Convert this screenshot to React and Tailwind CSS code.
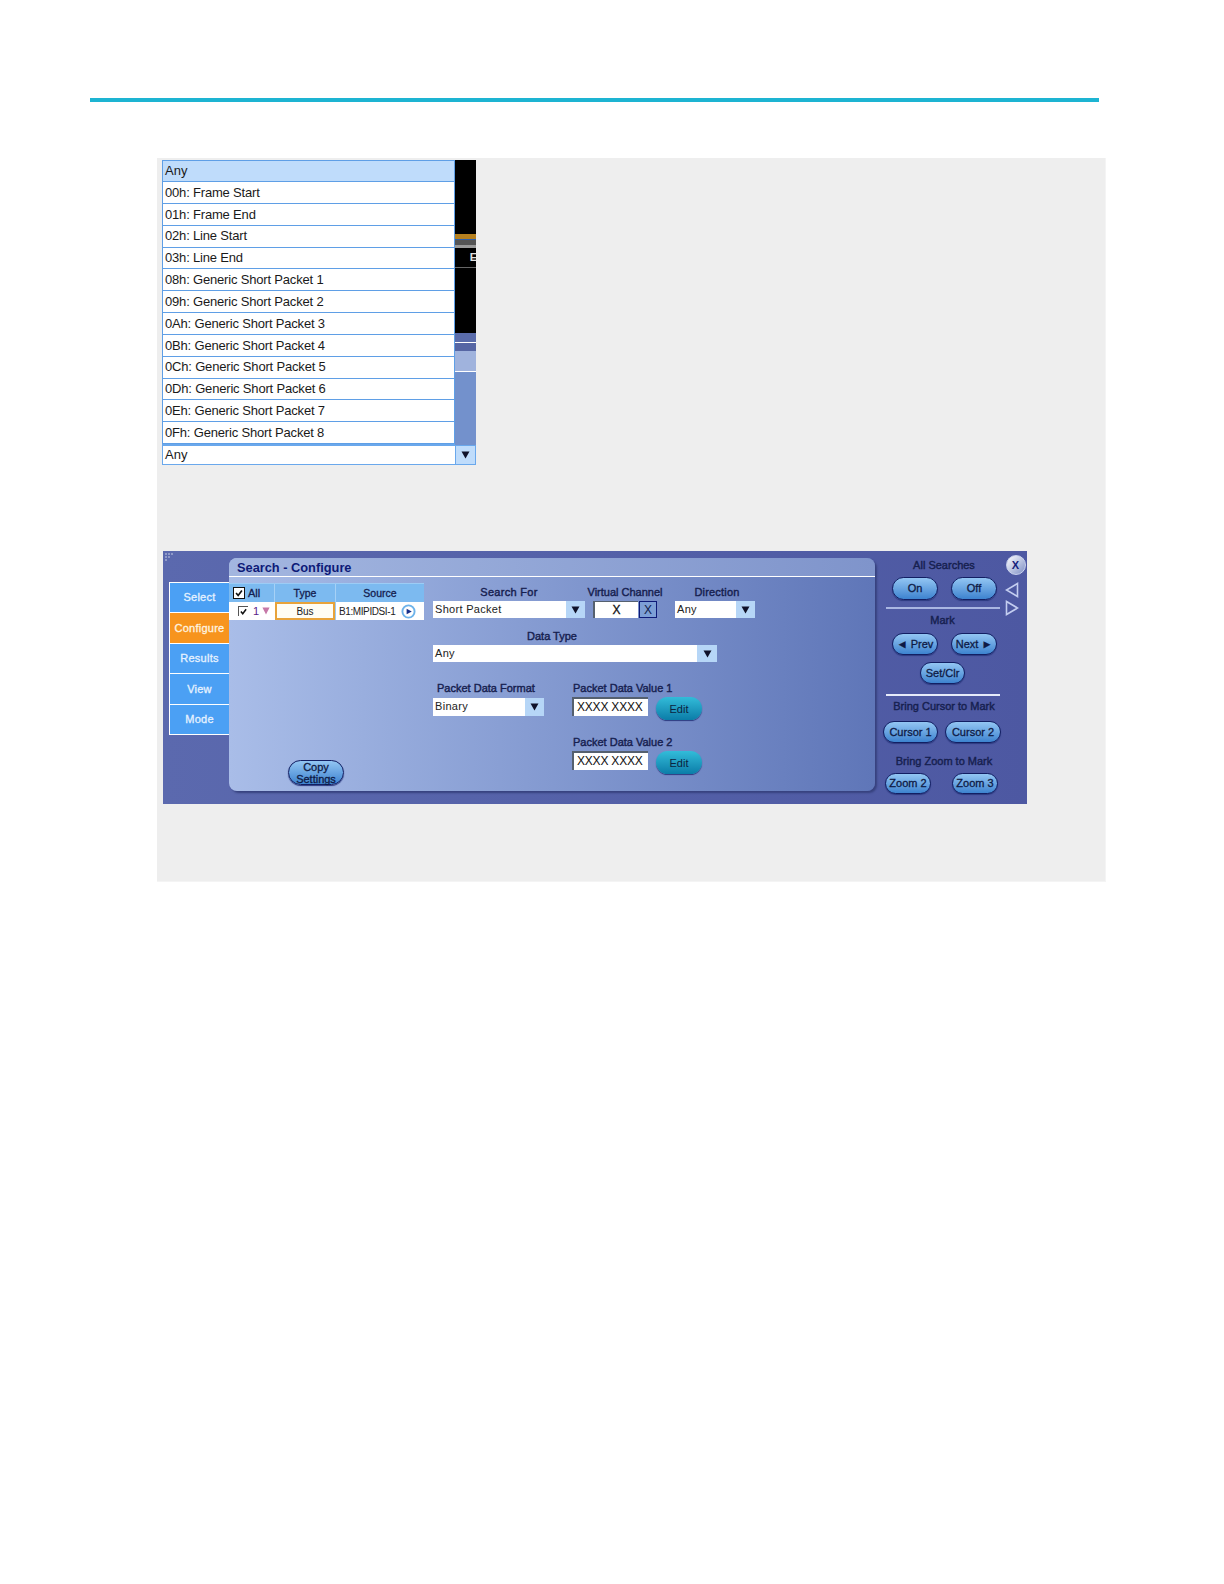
const FONT = "font-['Liberation_Sans',Arial,sans-serif]";

const rows = [
  "00h: Frame Start",
  "01h: Frame End",
  "02h: Line Start",
  "03h: Line End",
  "08h: Generic Short Packet 1",
  "09h: Generic Short Packet 2",
  "0Ah: Generic Short Packet 3",
  "0Bh: Generic Short Packet 4",
  "0Ch: Generic Short Packet 5",
  "0Dh: Generic Short Packet 6",
  "0Eh: Generic Short Packet 7",
  "0Fh: Generic Short Packet 8",
];

function Down({ className = "w-[9px] h-[8px]" }) {
  return (
    <svg viewBox="0 0 9 8" className={className}>
      <polygon points="0.5,0.5 8.5,0.5 4.5,7.5" fill="#10122a" />
    </svg>
  );
}

function DropList() {
  return (
    <div className="flex ml-[5px] mt-[2px] w-[314px] h-[305px]">
      <div className="w-[293px] flex flex-col">
        <div className="h-[22px] shrink-0 bg-[#bfdcfb] border border-[#5f9fe6] flex items-center pl-[2px] text-[13px] text-[#1a1a1a]">
          Any
        </div>
        {rows.map((r) => (
          <div
            key={r}
            className="h-[21.85px] shrink-0 bg-white border-l border-r border-b border-[#5f9fe6] flex items-center pl-[2px] text-[13px] text-[#1a1a1a] tracking-[-0.18px] whitespace-nowrap"
          >
            {r}
          </div>
        ))}
        <div className="h-[21px] shrink-0 bg-white border-l border-b border-t-2 border-[#6aa8ec] flex items-center pl-[2px] text-[13px] text-[#1a1a1a]">
          Any
        </div>
      </div>
      <div className="w-[21px] flex flex-col">
        <div className="h-[74px] bg-black" />
        <div className="h-[5px] bg-[#b5801f]" />
        <div className="h-[1px] bg-[#2f5fa8]" />
        <div className="h-[5px] bg-[#555555]" />
        <div className="h-[3px] bg-[#9a9a9a]" />
        <div className="h-[19px] bg-black flex justify-end items-start text-[11px] font-bold text-[#e0e0e0] overflow-hidden">
          <span className="mr-[-1px] mt-[1px]">E</span>
        </div>
        <div className="h-[1px] bg-[#666666]" />
        <div className="h-[65px] bg-black" />
        <div className="h-[9px] bg-[#5a6cab]" />
        <div className="h-[1px] bg-white" />
        <div className="h-[8px] bg-[#5666a4]" />
        <div className="h-[20px] bg-[#a0b3dd]" />
        <div className="h-[1px] bg-white" />
        <div className="h-[73px] bg-[#7391cc]" />
        <div className="h-[20px] bg-[#bfdcfb] border border-[#6aa8ec] flex items-center justify-center">
          <Down />
        </div>
      </div>
    </div>
  );
}

function Tab({ label, active }) {
  return (
    <div
      className={
        active
          ? "h-[30.4px] bg-[#f7941d] border-t border-l border-white flex items-center justify-center text-[11px] tracking-[0.25px] text-[#fff4e0] [-webkit-text-stroke:0.3px_#fff4e0]"
          : "h-[30.4px] bg-[#4ba0f4] border-t border-l border-white flex items-center justify-center text-[11px] tracking-[0.25px] text-[#e6f2ff] [-webkit-text-stroke:0.3px_#e6f2ff]"
      }
    >
      {label}
    </div>
  );
}

function Check({ className }) {
  return (
    <div className={className}>
      <svg viewBox="0 0 12 12" className="w-full h-full">
        <path d="M2.5 6 L5 9 L9.5 3" stroke="#111" strokeWidth="2" fill="none" />
      </svg>
    </div>
  );
}

function Btn({ className, children }) {
  return (
    <div
      className={
        "rounded-full border border-[#121f63] bg-gradient-to-b from-[#93c6f3] to-[#3d83cf] flex items-center justify-center text-[11px] text-[#0e1a45] [-webkit-text-stroke:0.3px_#0e1a45] shadow-[0_1px_1px_#2d3a80] whitespace-nowrap " +
        className
      }
    >
      {children}
    </div>
  );
}

function Edit() {
  return (
    <div className="ml-[8px] w-[46px] h-[23px] rounded-full bg-gradient-to-b from-[#32bcd9] to-[#0a7da8] flex items-center justify-center text-[11px] text-[#0b2340] shadow-[0_1px_1px_#2d3a80] pt-[2px]">
      Edit
    </div>
  );
}

function Select({ className, text, arrow }) {
  return (
    <div className={"flex " + className}>
      <div className="flex-1 bg-white flex items-center pl-[2px] pb-[1px] text-[11px] tracking-[0.3px] text-[#222]">
        {text}
      </div>
      <div className={"bg-[#b6d6f7] flex items-center justify-center " + arrow}>
        <Down />
      </div>
    </div>
  );
}

function ValueBox({ text }) {
  return (
    <div className="w-[76px] h-[19px] bg-white border-t-2 border-l-2 border-[#55606f] flex items-center pl-[3px] pb-[1px] text-[12px] tracking-[-0.2px] text-[#111] whitespace-nowrap">
      {text}
    </div>
  );
}

function Label({ className, children }) {
  return (
    <div className={"text-[11px] leading-[14px] text-[#16204f] [-webkit-text-stroke:0.4px_#16204f] whitespace-nowrap " + className}>
      {children}
    </div>
  );
}

function Table() {
  return (
    <div className="mt-[6px] w-[195px] text-[10.5px] text-[#14204f] [-webkit-text-stroke:0.3px_#14204f]">
      <div className="flex h-[19px] bg-[#7cbaf0] border-t border-[#9cccf5]">
        <div className="w-[45px] flex items-center pl-[4px] gap-[3px]">
          <Check className="w-[12px] h-[12px] bg-white border border-[#111] shrink-0" />
          <span className="text-[11px]">All</span>
        </div>
        <div className="w-[61px] flex items-center justify-center pt-[1px] border-l border-[#a6d1f6]">Type</div>
        <div className="w-[89px] flex items-center justify-center pt-[1px] border-l border-[#a6d1f6]">Source</div>
      </div>
      <div className="flex h-[18px] bg-white [-webkit-text-stroke:0px] text-[10px]">
        <div className="w-[45px] flex items-center pl-[9px] text-[#5a1a88]">
          <Check className="w-[10px] h-[10px] bg-white border-t border-l border-[#555] shrink-0" />
          <span className="ml-[5px] text-[11px]">1</span>
          <svg viewBox="0 0 9 9" className="ml-[3px] w-[8px] h-[8px]">
            <polygon points="0.5,0.5 8.5,0.5 4.5,8.5" fill="#c678a8" />
          </svg>
        </div>
        <div className="w-[60px] ml-[1px] bg-[#fffdf4] border-2 border-[#e8a33a] flex items-center justify-center pt-[1px] text-[#222]">
          Bus
        </div>
        <div className="w-[89px] flex items-center pl-[3px] pt-[1px] text-[#222] bg-white tracking-[-0.4px] border-l border-[#9cccf5]">
          B1:MIPIDSI-1
          <svg viewBox="0 0 16 16" className="ml-[6px] w-[15px] h-[15px]">
            <circle cx="8" cy="8" r="6.5" fill="#ffffff" stroke="#6db3ea" strokeWidth="2" />
            <polygon points="6,5 11.5,8 6,11" fill="#16308a" />
          </svg>
        </div>
      </div>
    </div>
  );
}

function Form() {
  return (
    <div className="ml-[9px] flex flex-col">
      <div className="flex mt-[8px]">
        <div className="w-[152px]">
          <Label className="h-[16px] text-center tracking-[0.3px]">Search For</Label>
          <Select className="h-[17px]" text="Short Packet" arrow="w-[19px]" />
        </div>
        <div className="ml-[8px] w-[64px]">
          <Label className="h-[16px] flex justify-center">Virtual Channel</Label>
          <div className="flex h-[17px]">
            <div className="w-[45px] bg-white border-t border-l-2 border-[#55606f] flex items-center justify-center text-[12px] text-[#111] [-webkit-text-stroke:0.3px_#111]">
              X
            </div>
            <div className="ml-[1px] w-[18px] bg-[#7d9fd6] border border-[#0d1a78] flex items-center justify-center text-[12px] text-[#10204a]">
              X
            </div>
          </div>
        </div>
        <div className="ml-[18px] w-[80px]">
          <Label className="h-[16px] flex justify-center pl-[4px] tracking-[0.2px]">Direction</Label>
          <Select className="h-[17px]" text="Any" arrow="w-[19px]" />
        </div>
      </div>

      <Label className="mt-[11px] h-[16px] w-[238px] text-center">Data Type</Label>
      <Select className="h-[17px] w-[284px]" text="Any" arrow="w-[20px]" />

      <div className="flex mt-[19px]">
        <div className="w-[139px]">
          <Label className="h-[17px] pl-[4px]">Packet Data Format</Label>
          <Select className="h-[18px] w-[111px]" text="Binary" arrow="w-[19px]" />
        </div>
        <div>
          <Label className="h-[16px] pl-[1px]">Packet Data Value 1</Label>
          <div className="flex items-start">
            <ValueBox text="XXXX XXXX" />
            <Edit />
          </div>
          <Label className="mt-[15px] h-[16px] pl-[1px]">Packet Data Value 2</Label>
          <div className="flex items-start">
            <ValueBox text="XXXX XXXX" />
            <Edit />
          </div>
        </div>
      </div>
    </div>
  );
}

function MainPanel() {
  return (
    <div className="mt-[7px] w-[646px] h-[233px] rounded-[8px] bg-gradient-to-r from-[#a9bde8] to-[#5f76b8] shadow-[2px_2px_2px_#37427f] flex flex-col">
      <div className="h-[19px] shrink-0 rounded-t-[8px] border-b border-white bg-gradient-to-r from-[#a3b6e0] to-[#7f94cb] pl-[8px] pt-[2px] flex items-center text-[12.8px] font-bold text-[#0d1a78]">
        Search - Configure
      </div>
      <div className="flex flex-1">
        <div className="w-[195px] flex flex-col">
          <Table />
          <Btn className="ml-[59px] mt-[140px] w-[56px] h-[25px] flex-col text-[10.5px] leading-[12px]">
            <span>Copy</span>
            <span>Settings</span>
          </Btn>
        </div>
        <Form />
      </div>
    </div>
  );
}

function RightCol() {
  return (
    <div className="flex">
      <div className="w-[125px] ml-[5px] flex flex-col">
        <Label className="mt-[7px] h-[14px] ml-[64px] -translate-x-1/2 w-fit">All Searches</Label>
        <div className="mt-[5px] ml-[12px] flex gap-[13px]">
          <Btn className="w-[46px] h-[23px]">On</Btn>
          <Btn className="w-[46px] h-[23px]">Off</Btn>
        </div>
        <div className="mt-[7px] ml-[6px] w-[114px] h-[2px] bg-[#a9b6e2]" />
        <Label className="mt-[4px] h-[14px] text-center">Mark</Label>
        <div className="mt-[6px] ml-[12px] flex gap-[13px]">
          <Btn className="w-[46px] h-[22px]">◄ Prev</Btn>
          <Btn className="w-[46px] h-[22px]">Next ►</Btn>
        </div>
        <Btn className="mt-[7px] ml-[40px] w-[45px] h-[22px]">Set/Clr</Btn>
        <div className="mt-[10px] ml-[6px] w-[114px] h-[2px] bg-[#e6ebfa]" />
        <Label className="mt-[3px] h-[14px] ml-[64px] -translate-x-1/2 w-fit">Bring Cursor to Mark</Label>
        <div className="mt-[8px] ml-[3px] flex gap-[7px]">
          <Btn className="w-[55px] h-[22px]">Cursor 1</Btn>
          <Btn className="w-[56px] h-[22px]">Cursor 2</Btn>
        </div>
        <Label className="mt-[11px] h-[14px] ml-[64px] -translate-x-1/2 w-fit">Bring Zoom to Mark</Label>
        <div className="mt-[5px] ml-[5px] flex gap-[21px]">
          <Btn className="w-[46px] h-[21px]">Zoom 2</Btn>
          <Btn className="w-[46px] h-[21px]">Zoom 3</Btn>
        </div>
      </div>
      <div className="w-[21px] flex flex-col items-center">
        <div className="mt-[4px] w-[20px] h-[20px] rounded-full bg-gradient-to-br from-white to-[#7f8fc4] border border-[#c9d2ee] flex items-center justify-center text-[11px] font-bold text-[#14207a]">
          X
        </div>
        <svg viewBox="0 0 14 16" className="mt-[7px] w-[14px] h-[16px] self-start">
          <polygon points="12.5,1.5 12.5,14.5 1.5,8" fill="none" stroke="#c3cdf0" strokeWidth="1.6" />
        </svg>
        <svg viewBox="0 0 14 16" className="mt-[2px] w-[14px] h-[16px] self-start">
          <polygon points="1.5,1.5 1.5,14.5 12.5,8" fill="none" stroke="#c3cdf0" strokeWidth="1.6" />
        </svg>
      </div>
    </div>
  );
}

function Instrument() {
  return (
    <div className="ml-[6px] mt-[86px] w-[864px] h-[253px] bg-gradient-to-r from-[#5b69ae] to-[#4d58a2] flex">
      <div className="w-[66px] flex flex-col">
        <svg viewBox="0 0 8 8" className="ml-[2px] mt-[2px] w-[8px] h-[8px]">
          <g fill="#8f9ac8">
            <rect x="0" y="0" width="2" height="2" />
            <rect x="3" y="0" width="2" height="2" />
            <rect x="6" y="0" width="2" height="2" />
            <rect x="0" y="3" width="2" height="2" />
            <rect x="3" y="3" width="2" height="2" />
            <rect x="0" y="6" width="2" height="2" />
          </g>
        </svg>
        <div className="ml-[6px] mt-[21px] w-[60px] flex flex-col border-b border-white">
          <Tab label="Select" />
          <Tab label="Configure" active />
          <Tab label="Results" />
          <Tab label="View" />
          <Tab label="Mode" />
        </div>
      </div>
      <MainPanel />
      <RightCol />
    </div>
  );
}

export default function App() {
  return (
    <div className={"w-[1224px] h-[1584px] bg-white flex flex-col overflow-hidden " + FONT}>
      <div className="ml-[90px] mt-[98px] w-[1009px] h-[4px] bg-[#1db4d2] shrink-0" />
      <div className="ml-[157px] mt-[56px] w-[949px] h-[724px] bg-[#eeeeee] border-r border-b border-[#f4f4f4] shrink-0 overflow-hidden">
        <DropList />
        <Instrument />
      </div>
    </div>
  );
}
